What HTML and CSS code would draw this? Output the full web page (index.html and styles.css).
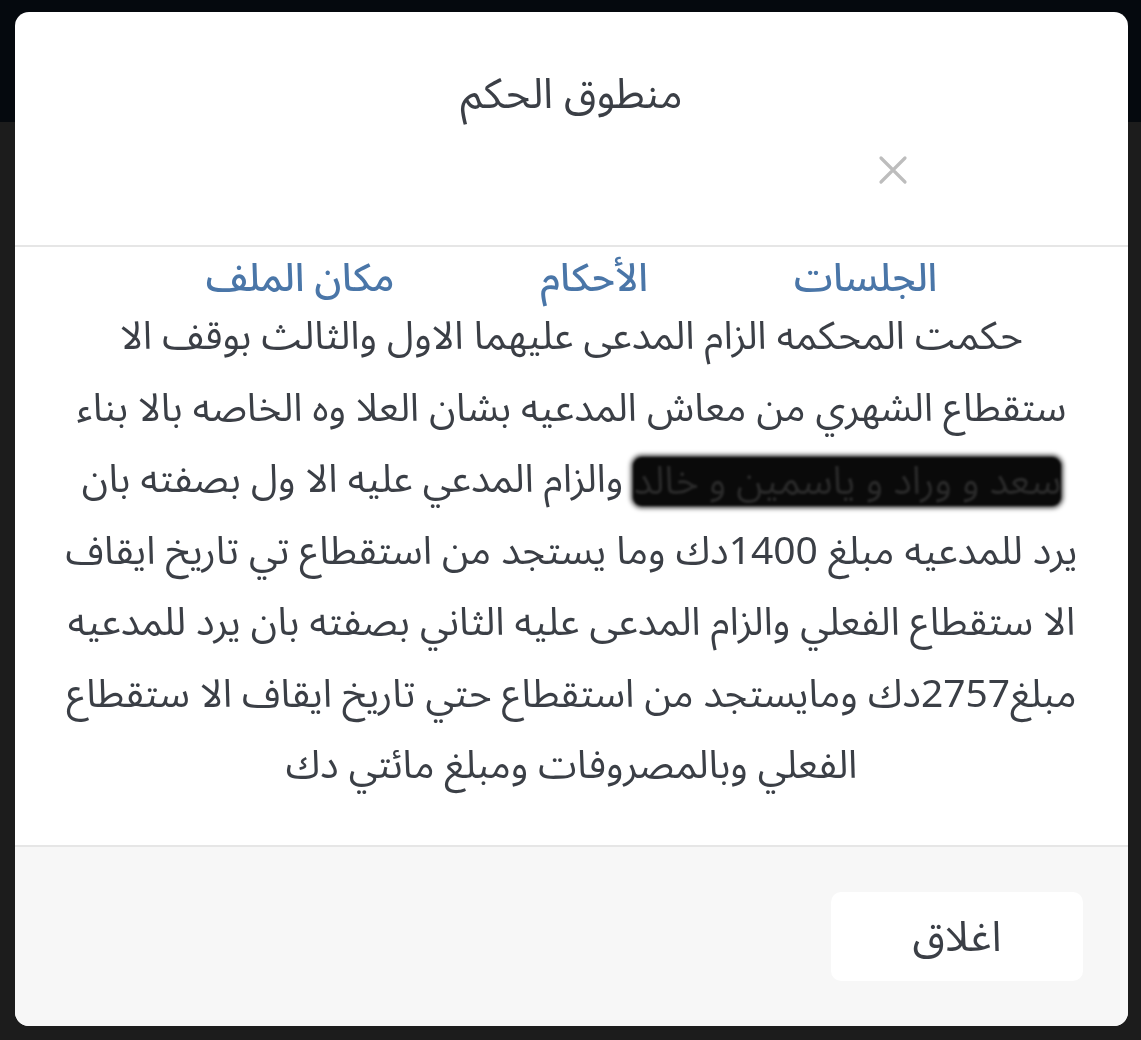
FILE: index.html
```html
<!DOCTYPE html>
<html lang="ar">
<head>
<meta charset="utf-8">
<title>منطوق الحكم</title>
<link rel="stylesheet" href="styles.css">
</head>
<body>
<div class="page">
  <div class="topbar"></div>
  <div class="content"></div>
</div>
<div class="modal" dir="rtl">
  <div class="modal-header">
    <h2 class="modal-title">منطوق الحكم</h2>
    <div class="close-row">
      <button class="close" aria-label="close">
        <svg width="30" height="30" viewBox="0 0 30 30"><path d="M3 3 L27 27 M27 3 L3 27" stroke="#bdbdbd" stroke-width="3.2" stroke-linecap="round" fill="none"/></svg>
      </button>
    </div>
  </div>
  <div class="tabs">
    <a class="tab">الجلسات</a>
    <a class="tab">الأحكام</a>
    <a class="tab">مكان الملف</a>
  </div>
  <div class="modal-body">
    <div class="line">حكمت المحكمه الزام المدعى عليهما الاول والثالث بوقف الا</div>
    <div class="line">ستقطاع الشهري من معاش المدعيه بشان العلا وه الخاصه بالا بناء</div>
    <div class="line"><span class="redact">سعد و وراد و ياسمين و خالد</span> والزام المدعي عليه الا ول بصفته بان</div>
    <div class="line">يرد للمدعيه مبلغ 1400دك وما يستجد من استقطاع تي تاريخ ايقاف</div>
    <div class="line">الا ستقطاع الفعلي والزام المدعى عليه الثاني بصفته بان يرد للمدعيه</div>
    <div class="line">مبلغ2757دك ومايستجد من استقطاع حتي تاريخ ايقاف الا ستقطاع</div>
    <div class="line">الفعلي وبالمصروفات ومبلغ مائتي دك</div>
  </div>
  <div class="modal-footer">
    <button class="btn-close">اغلاق</button>
  </div>
</div>
</body>
</html>
```
FILE: styles.css
```css
html, body {
  margin: 0;
  padding: 0;
  background: #1c1c1c;
  font-family: "Noto Sans Arabic", "DejaVu Sans", sans-serif;
}
.page {
  display: flex;
  flex-direction: column;
  height: 1040px;
}
.topbar {
  height: 122px;
  background: #05090e;
}
.content {
  flex: 1;
  background: #1c1c1c;
}
.modal {
  position: fixed;
  left: 15px;
  top: 12px;
  width: 1113px;
  height: 1014px;
  background: #ffffff;
  border-radius: 14px;
  overflow: hidden;
  display: flex;
  flex-direction: column;
  color: #3b3f46;
}
.modal-header {
  height: 235px;
  border-bottom: 2px solid #e6e6e6;
  display: flex;
  flex-direction: column;
  align-items: center;
  box-sizing: border-box;
  padding-top: 58px;
}
.modal-title {
  margin: 0;
  font-size: 42px;
  font-weight: normal;
  line-height: 50px;
  color: #3b3f46;
}
.close-row {
  align-self: stretch;
  display: flex;
  justify-content: flex-start;
  padding-right: 220px;
  margin-top: 35px;
}
.close {
  background: none;
  border: 0;
  padding: 0;
  width: 30px;
  height: 30px;
  display: flex;
}
.tabs {
  display: flex;
  justify-content: center;
  gap: 146px;
  padding-top: 10px;
  height: 44px;
  line-height: 44px;
}
.tab {
  font-size: 39px;
  color: #4a76a8;
  font-weight: 500;
}
.modal-body {
  flex: 1;
  text-align: center;
  padding: 0 20px;
}
.line {
  font-size: 39px;
  line-height: 71.5px;
  white-space: nowrap;
}
.redact {
  display: inline-block;
  vertical-align: middle;
  height: 49px;
  line-height: 49px;
  overflow: hidden;
  background: #0a0a0a;
  color: #2a2a2a;
  border-radius: 9px;
  box-shadow: 0 0 4px 2px rgba(10, 10, 10, 0.8);
  filter: blur(1px);
}
.modal-footer {
  height: 181px;
  border-top: 2px solid #e6e6e6;
  background: #f7f7f7;
  display: flex;
  align-items: center;
  justify-content: flex-start;
  padding-right: 45px;
  box-sizing: border-box;
}
.btn-close {
  width: 252px;
  height: 89px;
  background: #ffffff;
  border: 0;
  border-radius: 10px;
  font-family: inherit;
  font-size: 42px;
  color: #3b3f46;
}
```
